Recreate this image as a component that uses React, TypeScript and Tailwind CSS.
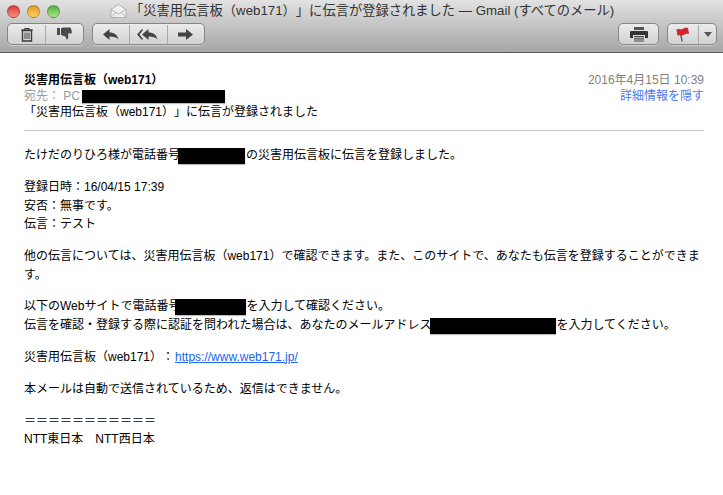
function Redact({ w, className = "" }: { w: string; className?: string }) {
  return <span className={`inline-block bg-black align-middle shadow-[0_1px_1px_rgba(0,0,0,0.25)] ${w} ${className}`} />;
}

function TrashIcon() {
  return (
    <svg viewBox="0 0 14 15" className="h-[15px] w-[14px]" fill="none" stroke="#3a3a3a">
      <path d="M1 3h12M5 3V1.500h4V3" strokeWidth="1.200" />
      <path d="M2.500 3.500h9v10.500h-9z" strokeWidth="1.400" />
      <path d="M5 5.500V12M7 5.500V12M9 5.500V12" strokeWidth="1" />
    </svg>
  );
}

function ThumbDownIcon() {
  return (
    <svg viewBox="0 0 16 14" className="h-[14px] w-[16px]" fill="#4a4a4a">
      <path d="M0 1h3v7H0zM4 1.500 6 .5h6.500c1 0 1.500.5 1.500 1.500v.5c1 .5 1 1.500.5 2 .5.5.5 1.500-.3 2H11l.3 3.500c0 1.500-.8 2.500-1.800 2.500L8.500 9.500 4 8z" />
    </svg>
  );
}

function ReplyIcon({ x = 0 }: { x?: number }) {
  return <path transform={`translate(${x} 0)`} d="M0 5.500 6.500 0v3.500c5 0 8 2.500 9 7-2-2.300-5-3-9-3V11z" />;
}

function PrinterIcon() {
  return (
    <svg viewBox="0 0 18 15" className="h-[15px] w-[18px]">
      <path d="M4 0h10v3H4z" fill="#555" />
      <path d="M1 4h16a1 1 0 0 1 1 1v6h-3V8H3v3H0V5a1 1 0 0 1 1-1z" fill="#333" />
      <path d="M4 9h10v1.200H4zM4 11.200h10v1.200H4zM4 13.400h10v1.200H4z" fill="#444" />
    </svg>
  );
}

function FlagIcon() {
  return (
    <svg viewBox="0 0 14 15" className="h-[15px] w-[14px]">
      <path d="M4.500 5 6 14.500" stroke="#555" strokeWidth="1.400" fill="none" />
      <path d="M.5 2.500c3-1.500 4 .5 6-.5s3-1.500 5.500-1l1 6c-2.500-.5-3.500 0-5.500 1s-3-.5-6 .5z" fill="#d3252b" />
    </svg>
  );
}

function Light({ className }: { className: string }) {
  return <span className={`size-[13px] rounded-full border border-black/25 bg-gradient-to-b ${className}`} />;
}

const Sep = () => <span className="h-[19px] w-px bg-[#a8a8a8]" />;

function Btn({ className = "", children }: { className?: string; children: React.ReactNode }) {
  return (
    <div className={`flex h-[22px] items-center rounded-[5px] border border-[#858585] bg-gradient-to-b from-[#ebebeb] to-[#d2d2d2] shadow-[0_1px_0_rgba(255,255,255,0.4)] ${className}`}>
      {children}
    </div>
  );
}

function Toolbar() {
  return (
    <div className="h-[53px] border-b border-[#5c5c5c] bg-gradient-to-b from-[#e2e2e2] to-[#a6a6a6] pl-[7px] pr-[6px]">
      <div className="relative flex h-[22px] items-center">
        <div className="flex gap-[7px] pt-[1px]">
          <Light className="from-[#d83a3a] to-[#fb8a80]" />
          <Light className="from-[#e09a20] to-[#fbd060]" />
          <Light className="from-[#55b03c] to-[#a8e888]" />
        </div>
        <div className="absolute left-[103px] top-[2px] flex items-center gap-[3px] text-[13.27px] text-[#333]">
          <svg viewBox="0 0 17 14" className="h-[14px] w-[17px]" fill="#f1f1f1" stroke="#a5a5a5" strokeWidth="0.800">
            <path d="M1 5.500 8.500.5 16 5.500V13.500H1z" />
            <path d="M1 5.500 8.500 10 16 5.500M1 13.500 6 8M16 13.500 11 8" fill="none" />
          </svg>
          <span className="whitespace-nowrap">「災害用伝言板（web171）」に伝言が登録されました — Gmail (すべてのメール)</span>
        </div>
      </div>
      <div className="flex items-center pt-[1px]">
        <Btn className="w-[77px]">
          <span className="flex flex-1 justify-center"><TrashIcon /></span>
          <Sep />
          <span className="flex flex-1 justify-center"><ThumbDownIcon /></span>
        </Btn>
        <Btn className="ml-[8px] w-[113px]">
          <span className="flex flex-1 justify-center">
            <svg viewBox="0 0 16 11" className="h-[11px] w-[16px]" fill="#444"><ReplyIcon /></svg>
          </span>
          <Sep />
          <span className="flex flex-1 justify-center">
            <svg viewBox="0 0 22 11" className="h-[11px] w-[22px]" fill="#444">
              <path d="M5 0 0 5.500 5 11 6 10 2.500 5.500 6 1z" />
              <ReplyIcon x={5} />
            </svg>
          </span>
          <Sep />
          <span className="flex flex-1 justify-center">
            <svg viewBox="0 0 15 11" className="h-[11px] w-[15px]" fill="#444"><path d="M0 3.500h8V0l7 5.500-7 5.500V7.500H0z" /></svg>
          </span>
        </Btn>
        <Btn className="ml-auto w-[41px] justify-center"><PrinterIcon /></Btn>
        <Btn className="ml-[8px] w-[50px]">
          <span className="flex flex-1 justify-center"><FlagIcon /></span>
          <Sep />
          <span className="flex w-[17px] justify-center">
            <svg viewBox="0 0 8 5" className="h-[5px] w-[8px]" fill="#555"><path d="M0 0h8L4 5z" /></svg>
          </span>
        </Btn>
      </div>
    </div>
  );
}

const gaps = "mt-[13.5px]";

export default function App() {
  return (
    <div className="h-[495px] w-[723px] overflow-hidden bg-white text-[12px] leading-[18.5px] text-black [font-family:'Liberation_Sans','Noto_Sans_CJK_JP',sans-serif] [text-spacing-trim:space-all]">
      <Toolbar />
      <div className="pl-[24px] pr-[19px] pt-[19px]">
        <div className="flex justify-between">
          <div className="font-bold leading-[17px]">災害用伝言板（web171）</div>
          <div className="leading-[17px] text-[#7f7f7f]">2016年4月15日 10:39</div>
        </div>
        <div className="flex justify-between leading-[15px]">
          <div className="flex items-center text-[#9a9a9a]">
            <span>宛先： PC</span>
            <Redact w="w-[143px]" className="ml-[2px] h-[13px]" />
          </div>
          <div className="text-[#4a78f0]">詳細情報を隠す</div>
        </div>
        <div className="leading-[17px]">「災害用伝言板（web171）」に伝言が登録されました</div>
        <div className="mt-[9px] h-px bg-[#c4c4c4]" />
        <div className="mt-[15.25px]">
          たけだのりひろ様が電話番号<Redact w="w-[67px]" className="-ml-[2px] mr-[1px] h-[16px]" />の災害用伝言板に伝言を登録しました。
        </div>
        <div className={gaps}>
          <div>登録日時：16/04/15 17:39</div>
          <div>安否：無事です。</div>
          <div>伝言：テスト</div>
        </div>
        <div className={gaps}>
          他の伝言については、災害用伝言板（web171）で確認できます。また、このサイトで、あなたも伝言を登録することができます。
        </div>
        <div className="mt-[13px]">
          <div>
            以下のWebサイトで電話番号<Redact w="w-[71px]" className="-ml-[5px] h-[16px]" />を入力して確認ください。
          </div>
          <div>
            伝言を確認・登録する際に認証を問われた場合は、あなたのメールアドレス<Redact w="w-[126px]" className="-ml-[1px] h-[16px]" />を入力してください。
          </div>
        </div>
        <div className={gaps}>
          災害用伝言板（web171）：<span className="ml-[1px] text-[#1a63f0] underline">https://www.web171.jp/</span>
        </div>
        <div className={gaps}>本メールは自動で送信されているため、返信はできません。</div>
        <div className={gaps}>
          <div>＝＝＝＝＝＝＝＝＝＝＝</div>
          <div>NTT東日本　NTT西日本</div>
        </div>
      </div>
    </div>
  );
}
